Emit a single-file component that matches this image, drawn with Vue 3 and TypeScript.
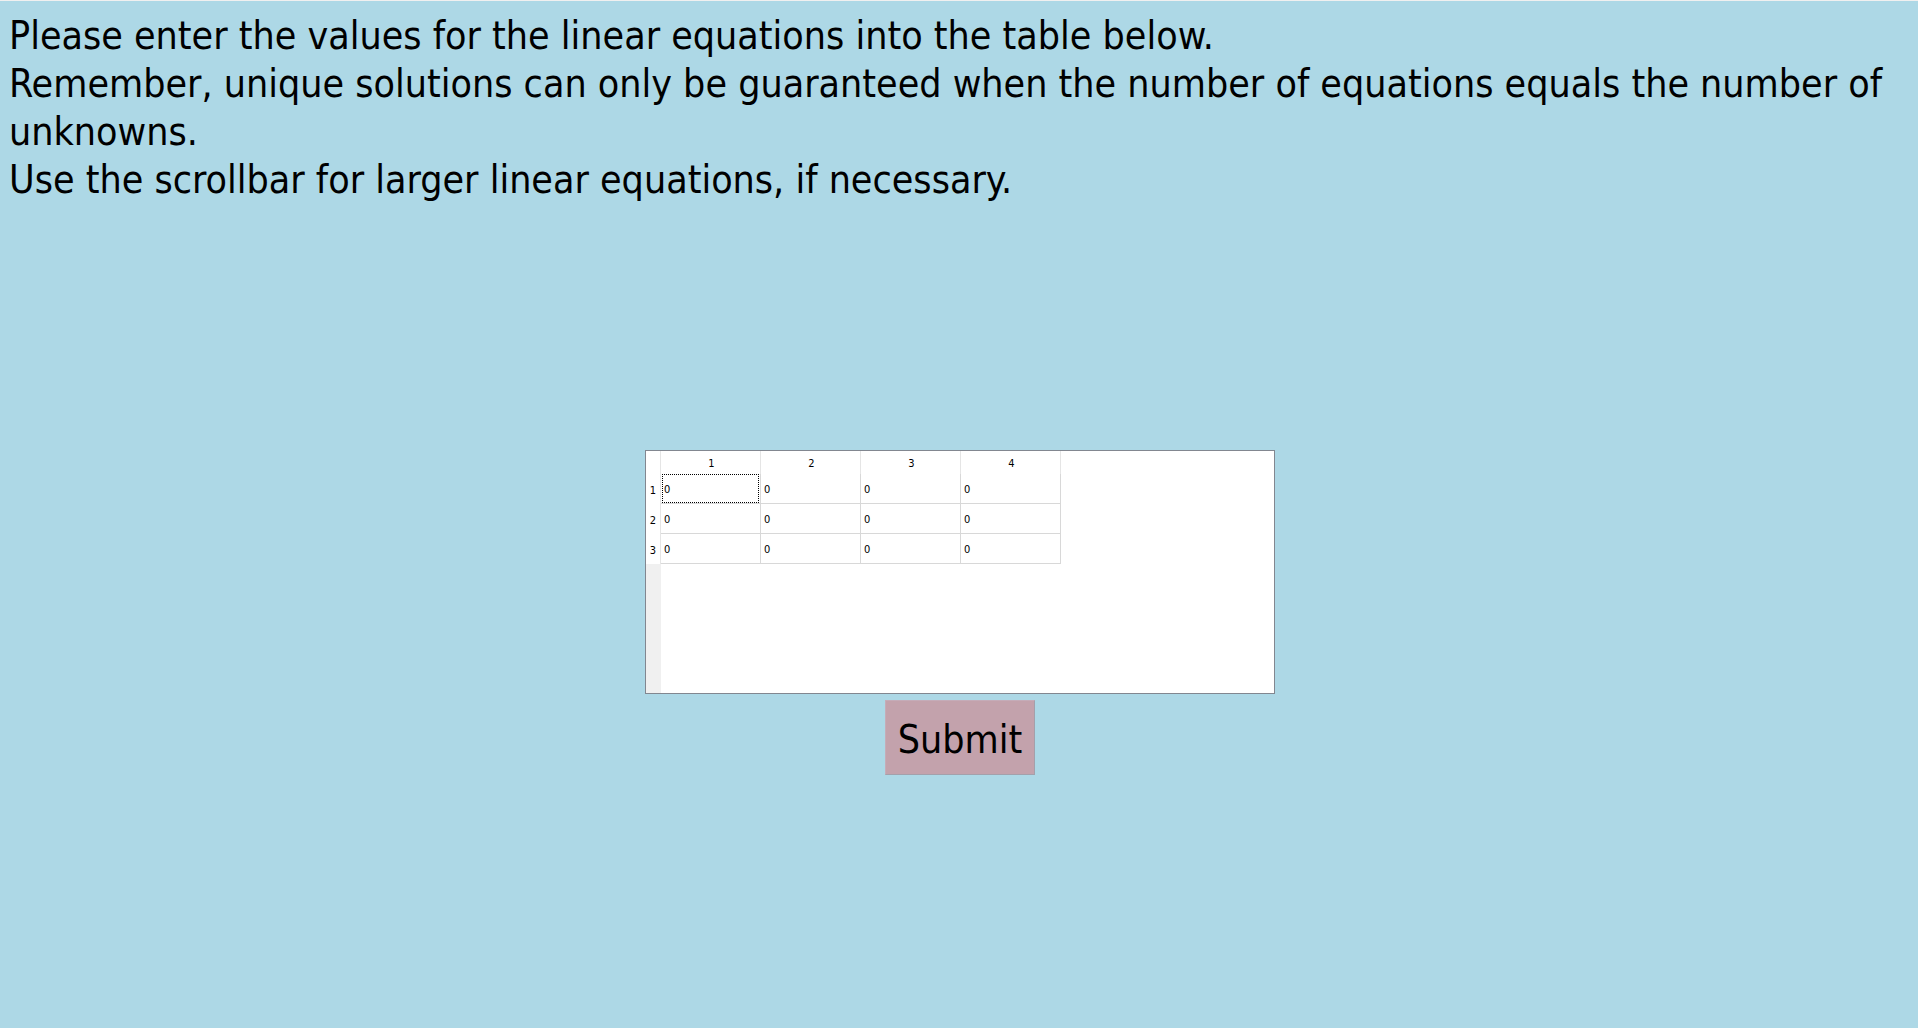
<script setup lang="ts">
import { ref } from 'vue'

const rowCount = 3
const columnCount = 4

const cells = ref<string[][]>(
  Array.from({ length: rowCount }, () => Array.from({ length: columnCount }, () => '0')),
)
const current = ref({ row: 0, column: 0 })

function select(row: number, column: number): void {
  current.value = { row, column }
}

function isCurrent(row: number, column: number): boolean {
  return current.value.row === row && current.value.column === column
}
</script>

<template>
  <main class="page">
    <div class="intro">
      <p>Please enter the values for the linear equations into the table below.</p>
      <p>
        Remember, unique solutions can only be guaranteed when the number of equations equals the
        number of unknowns.
      </p>
      <p>Use the scrollbar for larger linear equations, if necessary.</p>
    </div>
    <form class="entry" @submit.prevent>
      <div class="sheet">
        <table>
          <thead>
            <tr>
              <td class="corner"></td>
              <th v-for="c in columnCount" :key="c" scope="col">{{ c }}</th>
            </tr>
          </thead>
          <tbody>
            <tr v-for="(row, r) in cells" :key="r">
              <th scope="row">{{ r + 1 }}</th>
              <td v-for="(_, c) in row" :key="c">
                <input
                  v-model="row[c]"
                  type="text"
                  :class="{ current: isCurrent(r, c) }"
                  :aria-label="`Row ${r + 1}, column ${c + 1}`"
                  @focus="select(r, c)"
                />
              </td>
            </tr>
          </tbody>
        </table>
        <div class="gutter"></div>
      </div>
      <button type="submit">Submit</button>
    </form>
  </main>
</template>

<style>
body {
  margin: 0;
  background: #add8e6;
}
</style>

<style scoped>
.page {
  box-sizing: border-box;
  display: flex;
  flex-direction: column;
  min-height: 100vh;
  padding: 11px 7px 7px 9px;
  border-top: 1px solid #f0f0f0;
  background: #add8e6;
  color: #000;
  font-family: Tahoma, 'DejaVu Sans Condensed', 'DejaVu Sans', sans-serif;
  font-stretch: condensed;
}

.intro {
  font-size: 39px;
  line-height: 48px;
}

.intro p {
  margin: 0;
}

.entry {
  flex: 1;
  display: flex;
  flex-direction: column;
  align-items: center;
  justify-content: center;
  gap: 6px;
}

.sheet {
  box-sizing: border-box;
  display: flex;
  flex-direction: column;
  width: 630px;
  max-width: 100%;
  height: 244px;
  overflow: auto;
  border: 1px solid #828790;
  background: #fff;
  font-size: 11px;
}

table {
  table-layout: fixed;
  width: 415px;
  border-collapse: separate;
  border-spacing: 0;
}

th,
td {
  box-sizing: border-box;
  padding: 0;
  font-weight: normal;
}

th {
  border-right: 1px solid #e5e5e5;
  text-align: center;
}

thead th,
.corner {
  height: 23px;
}

thead th {
  padding: 2px 0 0 2px;
}

.corner {
  width: 15px;
  border-right: 1px solid #e5e5e5;
}

tbody th,
tbody td {
  height: 30px;
}

tbody th {
  padding-top: 2px;
}

tbody td {
  border-right: 1px solid #d8d8d8;
  border-bottom: 1px solid #d8d8d8;
}

input {
  display: block;
  box-sizing: border-box;
  width: 97px;
  height: 29px;
  margin: 0 0 0 1px;
  padding: 2px 1px 0;
  border: 1px solid transparent;
  outline: none;
  background: transparent;
  color: inherit;
  font: inherit;
}

input.current {
  border: 1px dotted #000;
}

.gutter {
  flex: 1;
  width: 15px;
  background: #f0f0f0;
}

button {
  box-sizing: border-box;
  width: 150px;
  height: 75px;
  padding: 4px 0 0;
  border: 1px solid;
  border-color: #c5acb8 #a3a0ab #a3a0ab #c5acb8;
  border-radius: 0;
  background: #c3a2ac;
  color: inherit;
  font: inherit;
  font-size: 39px;
}
</style>
